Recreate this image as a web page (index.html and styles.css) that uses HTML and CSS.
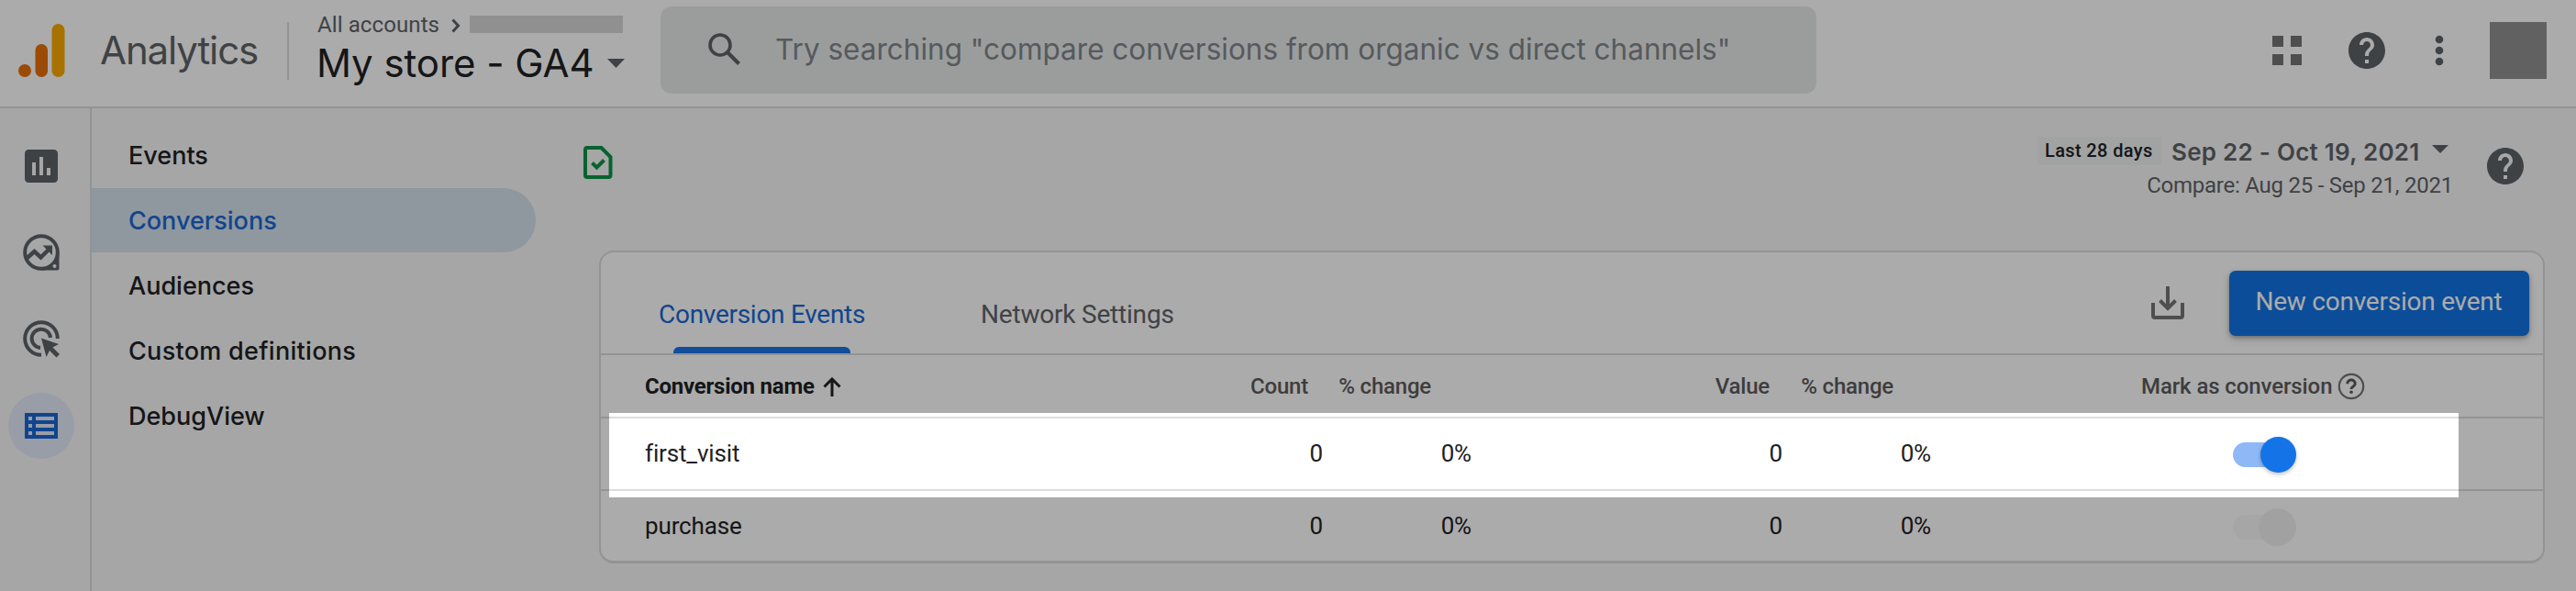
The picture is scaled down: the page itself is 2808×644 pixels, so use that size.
FILE: index.html
```
<!DOCTYPE html>
<html lang="en">
<head>
<meta charset="utf-8">
<title>Analytics</title>
<link rel="stylesheet" href="styles.css">
</head>
<body>
<header class="topbar">
  <svg class="logo" width="51" height="58" viewBox="0 0 51 58"><rect x="36.500" y="0" width="14" height="58" rx="7" fill="#f9ab00"/><rect x="18.500" y="22" width="13.500" height="36" rx="6.700" fill="#e8710a"/><circle cx="7" cy="51" r="7" fill="#e8710a"/></svg>
  <span class="brand">Analytics</span>
  <span class="divider"></span>
  <div class="account">
    <div class="crumbs"><span class="crumb">All accounts</span><svg class="chev" width="10" height="16" viewBox="0 0 10 16" fill="none" stroke="#5f6368" stroke-width="3"><path d="M1.500 1.500 7.500 8l-6 6.500"/></svg><span class="redacted"></span></div>
    <div class="property"><span class="property-name">My store - GA4</span><svg width="19" height="10" viewBox="0 0 19 10"><path d="M0 0h19L9.500 10z" fill="#5f6368"/></svg></div>
  </div>
  <div class="search">
    <svg width="35" height="35" viewBox="0 0 35 35" fill="none" stroke="#5f6368" stroke-width="3.600"><circle cx="13" cy="13" r="11"/><path d="M21 21l12.500 12.500" stroke-width="4.200"/></svg>
    <span class="placeholder">Try searching "compare conversions from organic vs direct channels"</span>
  </div>
  <div class="tools">
    <svg class="apps" width="32" height="32" viewBox="0 0 32 32" fill="#757575"><path d="M0 0h12v12H0zM20 0h12v12H20zM0 20h12v12H0zM20 20h12v12H20z"/></svg>
    <svg class="help" width="40" height="40" viewBox="2 2 20 20"><path fill="#5f6368" d="M12 2C6.480 2 2 6.480 2 12s4.480 10 10 10 10-4.480 10-10S17.520 2 12 2zm1 17h-2v-2h2v2zm2.070-7.750l-.9.920C13.450 12.900 13 13.500 13 15h-2v-.5c0-1.100.45-2.100 1.170-2.830l1.240-1.260c.37-.36.59-.86.59-1.410 0-1.100-.9-2-2-2s-2 .9-2 2H8c0-2.210 1.790-4 4-4s4 1.790 4 4c0 .88-.36 1.680-.93 2.250z"/></svg>
    <svg class="more" width="10" height="34" viewBox="0 0 10 34" fill="#5f6368"><circle cx="5" cy="5" r="4.300"/><circle cx="5" cy="17" r="4.300"/><circle cx="5" cy="29" r="4.300"/></svg>
    <span class="avatar"></span>
  </div>
</header>
<div class="body">
  <aside class="rail">
    <span class="rail-item"><svg width="36" height="36" viewBox="3 3 18 18"><path fill="#5f6368" d="M19 3H5c-1.100 0-2 .9-2 2v14c0 1.100.9 2 2 2h14c1.100 0 2-.9 2-2V5c0-1.100-.9-2-2-2zM9 17H7v-7h2v7zm4 0h-2V7h2v10zm4 0h-2v-4h2v4z"/></svg></span>
    <span class="rail-item"><svg width="40" height="40" viewBox="0 0 40 40"><path fill="#5f6368" d="M20 39.500H37.500a2 2 0 0 0 2-2V20l-6 11-8 6z"/><circle cx="20" cy="20" r="17.800" fill="#f8f9fa" stroke="#5f6368" stroke-width="4"/><path d="M3.500 27 12.500 19l7 6.500L29 16" fill="none" stroke="#5f6368" stroke-width="4.500"/><path d="M21.500 12.500h10.500v10.500z" fill="#5f6368"/><circle cx="34.500" cy="35" r="2" fill="#f8f9fa"/></svg></span>
    <span class="rail-item"><svg width="41" height="41" viewBox="0 0 41 41"><g fill="none" stroke="#5f6368" stroke-width="4"><path d="M20 37.800A17.800 17.800 0 1 1 37.800 20"/><path d="M19 30A10.200 10.200 0 1 1 30 19"/></g><path d="M20 19.500 39 26l-6.500 3.500L40 37l-3.500 3.500-7.500-7.500-3.500 7z" fill="#5f6368"/></svg></span>
    <span class="rail-item rail-current"><svg width="36" height="28" viewBox="0 0 36 28"><path fill="#1967d2" fill-rule="evenodd" d="M0 0h36v28H0zM4 4v4h4V4zm8 0v4h20V4zM4 12v4h4v-4zm8 0v4h20v-4zM4 20v4h4v-4zm8 0v4h20v-4z"/></svg></span>
  </aside>
  <nav class="nav">
    <a class="nav-item">Events</a>
    <a class="nav-item nav-selected">Conversions</a>
    <a class="nav-item">Audiences</a>
    <a class="nav-item nav-wide">Custom definitions</a>
    <a class="nav-item">DebugView</a>
  </nav>
  <main class="main">
    <div class="bar">
      <svg class="status" width="32" height="36" viewBox="0 0 32 36" fill="none" stroke="#0d9246" stroke-width="4"><path d="M4 2h15.500L29.500 12v20a2 2 0 0 1-2 2H4a2 2 0 0 1-2-2V4a2 2 0 0 1 2-2z"/><path d="M9.500 18.500l5 5 8-8"/></svg>
      <div class="dates">
        <div class="range"><span class="preset">Last 28 days</span><span class="range-text">Sep 22 - Oct 19, 2021</span><svg width="18" height="9" viewBox="0 0 18 9"><path d="M0 0h18L9 9z" fill="#5f6368"/></svg></div>
        <div class="compare">Compare: Aug 25 - Sep 21, 2021</div>
      </div>
      <svg class="page-help" width="40" height="40" viewBox="2 2 20 20"><path fill="#5f6368" d="M12 2C6.480 2 2 6.480 2 12s4.480 10 10 10 10-4.480 10-10S17.520 2 12 2zm1 17h-2v-2h2v2zm2.070-7.750l-.9.920C13.450 12.900 13 13.500 13 15h-2v-.5c0-1.100.45-2.100 1.170-2.830l1.240-1.260c.37-.36.59-.86.59-1.410 0-1.100-.9-2-2-2s-2 .9-2 2H8c0-2.210 1.790-4 4-4s4 1.790 4 4c0 .88-.36 1.680-.93 2.250z"/></svg>
    </div>
    <section class="card">
      <div class="tabs">
        <div class="tab tab-active"><span>Conversion Events</span><i class="indicator"></i></div>
        <div class="tab tab-net"><span>Network Settings</span></div>
        <svg class="download" width="36" height="36" viewBox="0 0 36 36" fill="none" stroke="#757575" stroke-width="4"><path d="M2 18V32a2 2 0 0 0 2 2h28a2 2 0 0 0 2-2V18"/><path d="M18 0v24M9.500 15.500l8.500 8.500 8.500-8.500"/></svg>
        <button class="primary">New conversion event</button>
      </div>
      <div class="row head">
        <div class="sort">Conversion name<svg width="20" height="21" viewBox="0 0 20 21" fill="none" stroke="#202124" stroke-width="3"><path d="M10 21V2.500M1.500 10.500 10 2l8.500 8.500"/></svg></div>
        <div class="num h-count">Count</div><div class="num h-cchange">% change</div>
        <div class="num h-value">Value</div><div class="num h-vchange">% change</div>
        <div class="mark">Mark as conversion<svg width="30" height="30" viewBox="0 0 30 30"><circle cx="15" cy="15" r="13.200" fill="none" stroke="#757575" stroke-width="2.200"/><path d="M10.800 12.300c0-5.600 8.400-5.600 8.400 0 0 3-4.200 3-4.200 5.700" fill="none" stroke="#5a5a5a" stroke-width="3"/><circle cx="15" cy="21.300" r="1.800" fill="#5a5a5a"/></svg></div>
      </div>
      <div class="row item spotlit">
        <div>first_visit</div><div class="num">0</div><div class="num">0%</div><div class="num">0</div><div class="num">0%</div>
        <div class="switch-cell"><span class="switch"><i class="knob"></i></span></div>
        <span class="spotlight"></span>
      </div>
      <div class="row item">
        <div>purchase</div><div class="num">0</div><div class="num">0%</div><div class="num">0</div><div class="num">0%</div>
        <div class="switch-cell"><span class="switch switch-off"><i class="knob"></i></span></div>
      </div>
    </section>
  </main>
</div>
</body>
</html>
```
FILE: styles.css
```
* { box-sizing: border-box; }
body { margin: 0; width: 2808px; height: 644px; overflow: hidden; background: #f8f8f9; font-family: Roboto, sans-serif; color: #202124; white-space: nowrap; }
svg { display: block; flex: none; }

.topbar { display: flex; align-items: flex-start; height: 118px; background: #fff; border-bottom: 2px solid #dadce0; }
.logo { margin: 26px 0 0 20px; }
.brand { width: 204px; margin-left: 38px; font: 400 42px/110px Inter, sans-serif; letter-spacing: -1.1px; color: #5f6368; }
.divider { width: 2px; height: 63px; margin-top: 24px; background: #dadce0; }
.account { width: 374px; margin-left: 31px; padding-top: 13px; }
.crumbs { display: flex; height: 28px; font-size: 24px; line-height: 28px; color: #5f6368; margin-bottom: 4px; }
.crumb { width: 146px; letter-spacing: 0.1px; }
.chev { margin-top: 7px; }
.redacted { width: 167px; height: 19px; margin: 4px 0 0 10px; background: #d7d7d7; }
.property { display: flex; align-items: center; height: 48px; font: 400 42px/48px Inter, sans-serif; }
.property-name { width: 317px; margin-left: -1px; letter-spacing: -0.05px; }
.search { display: flex; align-items: center; width: 1260px; height: 95px; margin-top: 7px; padding: 0 0 2px 52px; border-radius: 12px; background: #e8eaeb; }
.placeholder { margin-left: 38px; font: 400 31.5px Inter, sans-serif; letter-spacing: 0; color: #80868b; }
.tools { display: flex; align-items: flex-start; margin-left: 497px; }
.apps { margin-top: 39px; }
.help { margin: 35px 0 0 51px; }
.more { margin: 38px 0 0 54px; }
.avatar { width: 62px; height: 62px; margin: 24px 0 0 50px; background: #919191; }

.body { display: flex; height: 526px; }
.rail { display: flex; flex-direction: column; gap: 22.300px; width: 100px; padding: 27px 0 0 9px; border-right: 2px solid #dadce0; }
.rail-item { display: flex; align-items: center; justify-content: center; width: 72px; height: 72px; border-radius: 50%; flex: none; }
.rail-current { background: #e4ebfa; }
.nav { display: flex; flex-direction: column; gap: 1px; width: 490px; padding-top: 16px; }
.nav-item { width: 484px; height: 70px; padding-left: 40px; border-radius: 0 35px 35px 0; font: 500 27px/72px Inter, sans-serif; }
.nav-wide { letter-spacing: 0.3px; }
.nav-selected { background: #d6e1ed; color: #1967d2; }

.main { width: 2218px; padding-left: 46px; }
.bar { display: flex; height: 156px; }
.status { margin-top: 41px; }
.dates { display: flex; flex-direction: column; align-items: flex-end; width: 2006px; padding-top: 29px; color: #5f6368; }
.range { display: flex; align-items: flex-start; height: 38px; }
.preset { width: 135px; height: 31px; margin-top: 2px; padding-left: 8px; background: #f1f3f4; color: #202124; font-weight: 500; font-size: 20px; line-height: 31px; letter-spacing: 0.37px; }
.range-text { width: 284px; margin-left: 11px; font: 600 26px/38px Inter, sans-serif; letter-spacing: 0.25px; }
.range svg { margin: 11px 5px 0 0; }
.compare { font-size: 24px; line-height: 34px; letter-spacing: -0.24px; }
.page-help { margin: 43px 0 0 37px; }

.card { width: 2121px; margin-left: 17px; height: 341px; margin-top: -1px; background: #fff; border: 2px solid #dadce0; border-bottom-width: 3px; border-radius: 16px; }
.tabs { display: flex; align-items: flex-start; height: 112px; border-bottom: 2px solid #dadce0; padding-left: 63px; font-size: 28px; line-height: 34px; }
.tab { display: flex; flex-direction: column; width: 351px; padding-top: 51px; letter-spacing: -0.28px; }
.tab-active { color: #1967d2; }
.indicator { width: 193px; height: 7px; margin: 18px 0 0 16px; border-radius: 6px 6px 0 0; background: #1a73e8; }
.tab-net { width: 1276px; color: #5f6368; letter-spacing: -0.2px; }
.download { margin-top: 37px; }
.primary { width: 327px; height: 71px; margin: 20px 0 0 49px; padding: 0 1px 4px 0; border: 0; border-radius: 7px; background: #1173e4; color: #fff; font: 400 28px Roboto, sans-serif; letter-spacing: -0.24px; box-shadow: 0 2px 4px rgba(60,64,67,.35), 0 4px 10px rgba(60,64,67,.2); }
.row { display: grid; grid-template-columns: 560px 179px 162px 339px 162px 1fr; padding-left: 48px; }
.num { text-align: right; }
.head { height: 69px; border-bottom: 2px solid #dadce0; font-weight: 500; font-size: 24px; line-height: 68px; color: #5c5c5c; letter-spacing: -0.2px; }
.sort { display: flex; align-items: center; gap: 9px; font-weight: 700; color: #202124; letter-spacing: -0.23px; }
.h-count { padding-right: 16px; }
.h-cchange { padding-right: 44px; }
.h-value { padding-right: 14px; }
.h-vchange { padding-right: 41px; }
.mark { display: flex; align-items: center; gap: 6px; padding-left: 229px; letter-spacing: -0.1px; }
.item { height: 77px; font-size: 26px; line-height: 77px; letter-spacing: -0.15px; }
.spotlit { position: relative; height: 79px; border-bottom: 2px solid #dadce0; }
.spotlight { position: absolute; z-index: 5; left: 9px; top: -6px; width: 2016px; height: 92px; box-shadow: 0 0 0 3000px rgba(0,0,0,.33); }
.switch-cell { display: flex; align-items: center; padding: 1px 0 0 329px; }
.switch { display: flex; align-items: center; justify-content: flex-end; width: 69px; height: 27px; border-radius: 14px; background: linear-gradient(#8fb8f6, #8fb8f6) no-repeat 0 0 / 55px 27px; }
.knob { width: 39px; height: 39px; flex: none; border-radius: 50%; background: #1473e6; box-shadow: 0 2px 4px rgba(0,0,0,.25); }
.switch-off { background: linear-gradient(#f8f8f8, #f8f8f8) no-repeat 0 0 / 55px 27px; }
.switch-off .knob { width: 41px; height: 41px; background: #f1f1f1; box-shadow: none; }
```
